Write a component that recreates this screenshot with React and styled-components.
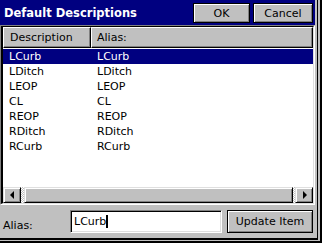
import React from "react";
import styled, { createGlobalStyle } from "styled-components";

const GlobalStyle = createGlobalStyle`
  html, body { margin: 0; padding: 0; background: #c0c0c0; }
  body { font-family: "DejaVu Sans", "Liberation Sans", sans-serif; font-size: 11px; color: #000; }
  * { box-sizing: border-box; }
`;

const Frame = styled.div`
  width: 322px;
  height: 243px;
  border-right: 2px solid #000;
  border-bottom: 2px solid #000;
  padding-right: 2px;
  padding-bottom: 1px;
`;

const FrameInner = styled.div`
  width: 318px;
  height: 240px;
  border-right: 1px solid #000;
  border-bottom: 2px solid #000;
  padding-right: 2px;
  padding-bottom: 2px;
`;

const Dialog = styled.div`
  width: 315px;
  height: 236px;
  display: flex;
  flex-direction: column;
  background: #c0c0c0;
`;

const TitleBar = styled.div`
  height: 25px;
  flex: none;
  background: #000080;
  display: flex;
  align-items: flex-start;
  padding: 3px 2px 0 4px;
`;

const Title = styled.div`
  flex: 1;
  color: #fff;
  font-weight: bold;
  font-size: 11.5px;
  line-height: 20px;
  white-space: nowrap;
`;

const ButtonGroup = styled.div`
  display: flex;
  gap: 3px;
`;

const WinButton = styled.div`
  width: ${(p) => p.$w}px;
  height: ${(p) => p.$h || 20}px;
  background: #c0c0c0;
  border: 1px solid #000;
  box-shadow: inset 1px 1px 0 #fff, inset -1px -1px 0 #808080;
  display: flex;
  align-items: center;
  justify-content: center;
  font-size: 11px;
  white-space: nowrap;
  flex: none;
`;

const ListView = styled.div`
  height: 180px;
  flex: none;
  border-style: solid;
  border-width: 1px;
  border-color: #808080 #fff #fff #808080;
`;

const ListInner = styled.div`
  height: 100%;
  display: flex;
  flex-direction: column;
  border-style: solid;
  border-width: 1px 1px 1px 2px;
  border-color: #000 #dfdfdf #dfdfdf #000;
  background: #fff;
`;

const Header = styled.div`
  height: 21px;
  flex: none;
  display: flex;
`;

const HeaderCell = styled.div`
  width: ${(p) => (p.$w ? `${p.$w}px` : "auto")};
  flex: ${(p) => (p.$w ? "none" : 1)};
  background: #c0c0c0;
  border-style: solid;
  border-width: 1px;
  border-color: #fff #000 #000 #fff;
  box-shadow: inset -1px -1px 0 #808080;
  padding-left: ${(p) => p.$pad}px;
  display: flex;
  align-items: center;
  font-size: 11px;
`;

const Rows = styled.div`
  flex: 1;
  padding-top: 1px;
  overflow: hidden;
`;

const Row = styled.div`
  height: 15px;
  display: flex;
  align-items: center;
  background: ${(p) => (p.$selected ? "#000080" : "transparent")};
  color: ${(p) => (p.$selected ? "#fff" : "#000")};
`;

const Cell = styled.div`
  width: ${(p) => (p.$w ? `${p.$w}px` : "auto")};
  flex: ${(p) => (p.$w ? "none" : 1)};
  padding-left: ${(p) => p.$pad}px;
  white-space: nowrap;
  line-height: 15px;
`;

const HScroll = styled.div`
  height: 16px;
  flex: none;
  display: flex;
  background: repeating-conic-gradient(#c0c0c0 0 25%, #fff 0 50%) 0 0 / 2px 2px;
`;

const ArrowButton = styled.div`
  width: 18px;
  height: 16px;
  flex: none;
  background: #c0c0c0;
  border-style: solid;
  border-width: 1px;
  border-color: #dfdfdf #000 #000 #dfdfdf;
  box-shadow: inset 1px 1px 0 #fff, inset -1px -1px 0 #808080;
  display: flex;
  align-items: center;
  justify-content: center;
`;

const Track = styled.div`
  flex: 1;
  display: flex;
  padding: 0 2px 0 3px;
`;

const Thumb = styled.div`
  flex: 1;
  background: #c0c0c0;
  border-style: solid;
  border-width: 1px;
  border-color: #dfdfdf #000 #000 #dfdfdf;
  box-shadow: inset 1px 1px 0 #fff, inset -1px -1px 0 #808080;
`;

const Footer = styled.div`
  flex: 1;
  display: flex;
  align-items: flex-start;
  padding: 5px 2px 0 3px;
`;

const Label = styled.div`
  width: 67px;
  height: 23px;
  flex: none;
  display: flex;
  align-items: flex-end;
  padding-bottom: 1px;
  font-size: 11px;
`;

const TextBox = styled.div`
  width: 152px;
  height: 23px;
  flex: none;
  margin-right: 5px;
  background: #fff;
  border-style: solid;
  border-width: 1px;
  border-color: #808080 #fff #fff #808080;
  box-shadow: inset 1px 1px 0 #000, inset -1px -1px 0 #dfdfdf;
  display: flex;
  align-items: center;
  padding-left: 3px;
  font-size: 11px;
`;

const Caret = styled.span`
  display: inline-block;
  width: 2px;
  height: 13px;
  background: #000;
  margin-left: 0px;
`;

const Tri = ({ dir }) => (
  <svg width="5" height="8" viewBox="0 0 5 8">
    {dir === "left" ? (
      <polygon points="4,0 4,8 0,4" fill="#000" />
    ) : (
      <polygon points="1,0 1,8 5,4" fill="#000" />
    )}
  </svg>
);

const items = [
  ["LCurb", "LCurb"],
  ["LDitch", "LDitch"],
  ["LEOP", "LEOP"],
  ["CL", "CL"],
  ["REOP", "REOP"],
  ["RDitch", "RDitch"],
  ["RCurb", "RCurb"],
];

export default function App() {
  return (
    <>
      <GlobalStyle />
      <Frame>
        <FrameInner>
          <Dialog>
            <TitleBar>
              <Title>Default Descriptions</Title>
              <ButtonGroup>
                <WinButton $w={57}>OK</WinButton>
                <WinButton $w={60}>Cancel</WinButton>
              </ButtonGroup>
            </TitleBar>
            <ListView>
              <ListInner>
                <Header>
                  <HeaderCell $w={88} $pad={6}>Description</HeaderCell>
                  <HeaderCell $pad={5}>Alias:</HeaderCell>
                </Header>
                <Rows>
                  {items.map(([d, a], i) => (
                    <Row key={d} $selected={i === 0}>
                      <Cell $w={88} $pad={6}>{d}</Cell>
                      <Cell $pad={6}>{a}</Cell>
                    </Row>
                  ))}
                </Rows>
                <HScroll>
                  <ArrowButton>
                    <Tri dir="left" />
                  </ArrowButton>
                  <Track>
                    <Thumb />
                  </Track>
                  <ArrowButton>
                    <Tri dir="right" />
                  </ArrowButton>
                </HScroll>
              </ListInner>
            </ListView>
            <Footer>
              <Label>Alias:</Label>
              <TextBox>
                LCurb
                <Caret />
              </TextBox>
              <WinButton $w={86} $h={23}>Update Item</WinButton>
            </Footer>
          </Dialog>
        </FrameInner>
      </Frame>
    </>
  );
}
